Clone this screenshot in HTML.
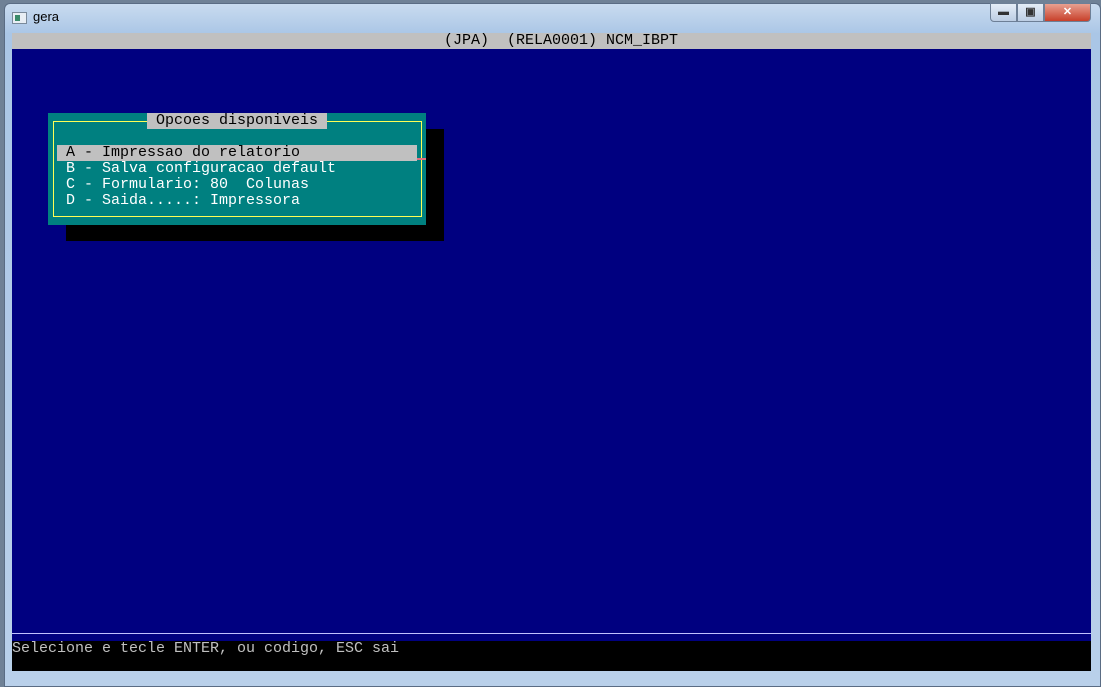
<!DOCTYPE html>
<html><head><meta charset="utf-8"><style>
*{margin:0;padding:0;box-sizing:border-box}
body{width:1101px;height:687px;overflow:hidden;background:#6f8196;position:relative;font-family:"Liberation Mono",monospace}
.win{position:absolute;left:4px;top:3px;width:1097px;height:684px;border-radius:6px 6px 0 0;background:linear-gradient(180deg,#c9dbef 0,#aac6e6 30px,#b9d0ea 100%);border:1px solid #5a6c84}
.title{position:absolute;left:33px;top:9px;font:13px "Liberation Sans",sans-serif;color:#000}
.ico{position:absolute;left:12px;top:12px;width:15px;height:12px;background:#e8eef4;border:1px solid #7a8a9a}
.ico:after{content:"";position:absolute;left:2px;top:2px;width:5px;height:6px;background:#3a8a6a}
.btns{position:absolute;left:990px;top:3px;height:19px;display:flex}
.b{height:19px;border:1px solid #6d7f96;background:linear-gradient(#e4edf7,#bccde3);color:#333;font:bold 11px "Liberation Sans";text-align:center;line-height:17px}
.term{position:absolute;left:12px;top:33px;width:1079px;height:638px;background:#000080;overflow:hidden;font-size:15px;line-height:16px;white-space:pre}
.t{position:absolute;height:16px}
</style></head><body>
<div class="win"></div>
<div class="ico"></div><div class="title">gera</div>
<div class="btns"><div class="b" style="width:27px;border-radius:0 0 0 4px">▬</div><div class="b" style="width:27px">▣</div><div class="b" style="width:47px;background:linear-gradient(#e8a090,#c8402a);color:#fff;border-radius:0 0 4px 0">✕</div></div>
<div class="term">
<div class="t" style="left:0;top:0;width:1079px;background:#c0c0c0;color:#000"><span style="position:absolute;left:432px">(JPA)  (RELA0001) NCM_IBPT</span></div>
<div class="t" style="left:54px;top:96px;width:378px;height:112px;background:#000"></div>
<div class="t" style="left:36px;top:80px;width:378px;height:112px;background:#008080"></div>
<div class="t" style="left:41px;top:88px;width:369px;height:96px;border:1px solid #ffff55"></div>
<div class="t" style="left:135px;top:80px;width:180px;background:#c0c0c0;color:#000"> Opcoes disponiveis</div>
<div class="t" style="left:45px;top:112px;width:360px;background:#c0c0c0;color:#000"> A - Impressao do relatorio</div>
<div class="t" style="left:405px;top:125px;width:9px;height:2px;background:#e07080"></div>
<div class="t" style="left:54px;top:128px;color:#fff">B - Salva configuracao default</div>
<div class="t" style="left:54px;top:144px;color:#fff">C - Formulario: 80  Colunas</div>
<div class="t" style="left:54px;top:160px;color:#fff">D - Saida.....: Impressora</div>
<div class="t" style="left:0;top:600px;width:1079px;height:1px;background:#c0c0ff"></div>
<div class="t" style="left:0;top:608px;width:1079px;height:30px;background:#000;color:#c0c0c0"><span style="position:absolute;left:0;top:0">Selecione e tecle ENTER, ou codigo, ESC sai</span></div>
</div>
</body></html>
